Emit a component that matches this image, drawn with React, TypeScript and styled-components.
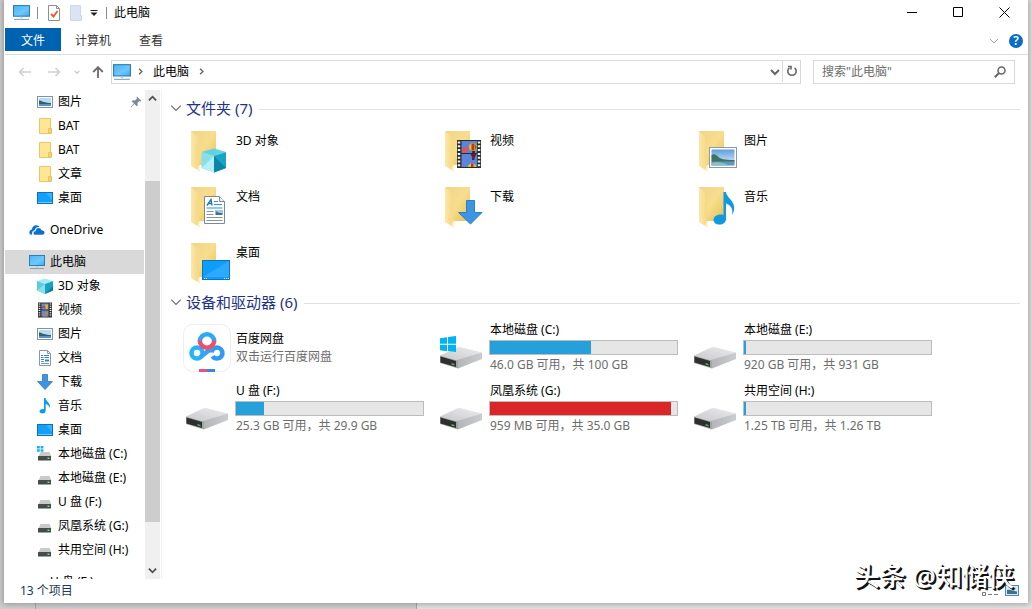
import React from "react";
import styled, { createGlobalStyle, css } from "styled-components";

const GlobalStyle = createGlobalStyle`
  * { box-sizing: border-box; }
  html, body, #root { height: 100%; margin: 0; }
  body {
    font: 12px/16px "Noto Sans", "Noto Sans CJK SC", sans-serif;
    color: #000;
    background: #e2e2e2;
    overflow: hidden;
  }
  button, input { font: inherit; color: inherit; border: 0; background: none; padding: 0; margin: 0; }
  ul { list-style: none; margin: 0; padding: 0; }
  h1, h2 { margin: 0; font-weight: normal; }
  a { color: inherit; text-decoration: none; }
  svg { display: block; flex: none; }
`;

/* ---------- window frame ---------- */

const Desktop = styled.div`
  position: relative;
  height: 100vh;
  padding: 0 4px 6px;
  background: linear-gradient(90deg, #cfcfcf 0 35px, #a9a9a9 35px 36px, #cfcfcf 36px 416px, #a9a9a9 416px 417px, #e2e2e2 417px);
`;

const Window = styled.div`
  display: flex;
  flex-direction: column;
  height: 100%;
  padding-left: 1px;
  background: #fff;
  box-shadow: 0 0 6px 1px rgba(0, 0, 0, 0.3);
`;

const TitleBar = styled.header`
  display: flex;
  align-items: center;
  height: 28px;
  padding: 0 1px 3px 8px;
`;

const Separator = styled.span<{ $gap: number }>`
  width: 1px;
  height: 12px;
  margin: 0 ${(p) => p.$gap}px;
  background: #8a8a8a;
`;

const QuickButton = styled.button<{ $width: number }>`
  display: flex;
  align-items: center;
  justify-content: center;
  width: ${(p) => p.$width}px;
  height: 20px;
`;

const WindowTitle = styled.h1`
  flex: 1;
  font-size: 12px;
`;

const WindowButton = styled.button`
  display: flex;
  align-items: center;
  justify-content: center;
  width: 46px;
  height: 24px;
`;

const Ribbon = styled.nav`
  display: flex;
  align-items: flex-start;
  height: 27px;
  padding-right: 5px;
  border-bottom: 1px solid #dadbdc;
`;

const RibbonTab = styled.button<{ $active?: boolean }>`
  height: 23px;
  padding: 2px 14px 0;
  color: #333;
  ${(p) => p.$active && css`
    padding: 2px 16px 0;
    color: #fff;
    background: #0063b1;
  `}
`;

const RibbonTools = styled.div`
  display: flex;
  align-items: center;
  gap: 10px;
  height: 26px;
  margin-left: auto;
`;

const HelpButton = styled.button`
  width: 14px;
  height: 14px;
  border-radius: 50%;
  background: #0a6cc4;
  color: #fff;
  font-size: 12px;
  font-weight: 600;
  line-height: 14px;
`;

/* ---------- address row ---------- */

const AddressRow = styled.div`
  display: flex;
  align-items: center;
  height: 35px;
  padding: 0 13px 2px 7px;
`;

const NavButton = styled.button<{ $width: number }>`
  display: flex;
  align-items: center;
  justify-content: center;
  width: ${(p) => p.$width}px;
  height: 24px;
`;

const AddressBox = styled.div`
  display: flex;
  flex: 1;
  align-items: center;
  height: 24px;
  margin-right: 12px;
  border: 1px solid #d9d9d9;
`;

const Crumb = styled.a`
  padding: 0 9px;
`;

const CrumbIcon = styled.span`
  padding: 0 6px 0 1px;
`;

const AddressEnd = styled.div`
  display: flex;
  margin-left: auto;
`;

const RefreshButton = styled(NavButton)`
  height: 22px;
  border-left: 1px solid #d9d9d9;
`;

const SearchBox = styled.label`
  display: flex;
  align-items: center;
  width: 202px;
  height: 24px;
  padding: 0 8px;
  border: 1px solid #d9d9d9;
`;

const SearchInput = styled.input`
  flex: 1;
  min-width: 0;
  outline: 0;
  &::placeholder { color: #6d6d6d; opacity: 1; }
`;

/* ---------- navigation pane ---------- */

const Body = styled.div`
  display: flex;
  flex: 1;
  min-height: 0;
`;

const NavPane = styled.nav`
  width: 140px;
  overflow: hidden;
`;

const NavGroup = styled.ul`
  & + & { margin-top: 8px; }
`;

const NavLink = styled.a<{ $root?: boolean; $selected?: boolean }>`
  display: flex;
  align-items: center;
  gap: 5px;
  height: 24px;
  margin-right: 1px;
  padding: 0 2px 0 ${(p) => (p.$root ? 24 : 32)}px;
  background: ${(p) => (p.$selected ? "#d9d9d9" : "transparent")};
  white-space: nowrap;
  > svg:last-child:not(:first-child) { margin-left: auto; }
`;

const Scrollbar = styled.div`
  display: flex;
  flex-direction: column;
  width: 15px;
  background: #f0f0f0;
`;

const ScrollButton = styled.button`
  display: flex;
  align-items: center;
  justify-content: center;
  height: 17px;
`;

const ScrollPart = styled.div<{ $share: number; $thumb?: boolean }>`
  flex: ${(p) => p.$share} 0 0;
  background: ${(p) => (p.$thumb ? "#cdcdcd" : "transparent")};
`;

/* ---------- content pane ---------- */

const Content = styled.main`
  flex: 1;
  margin-left: 1px;
  padding: 7px 8px 0 8px;
  border-left: 1px solid #f0f0f0;
  overflow: hidden;
`;

const GroupHeader = styled.h2`
  display: flex;
  align-items: center;
  height: 24px;
  margin-bottom: 2px;
  font-size: 15px;
  line-height: 22px;
  color: #1e3287;
  &::after {
    content: "";
    flex: 1;
    height: 1px;
    margin-left: 7px;
    background: #e2e2e2;
  }
`;

const GroupToggle = styled.button`
  display: flex;
  align-items: center;
  gap: 4px;
  padding-bottom: 2px;
`;

const TileGrid = styled.ul`
  display: grid;
  grid-template-columns: repeat(auto-fill, 254px);
  padding-left: 13px;
`;

const Tile = styled.li<{ $drive?: boolean }>`
  display: flex;
  align-items: center;
  gap: 4px;
  height: ${(p) => (p.$drive ? 61 : 56)}px;
`;

const TileText = styled.div<{ $top?: boolean }>`
  display: flex;
  flex-direction: column;
  gap: 2px;
  width: 189px;
  ${(p) => p.$top && css`
    align-self: flex-start;
    padding-top: 10px;
  `}
`;

const TileName = styled.span`
  padding-left: 1px;
`;

const TileDetail = styled.span`
  padding-left: 1px;
  color: #6d6d6d;
`;

const UsageBar = styled.div`
  height: 15px;
  border: 1px solid #bcbcbc;
  background: #e6e6e6;
`;

const UsageFill = styled.div<{ $full?: boolean }>`
  height: 100%;
  background: ${(p) => (p.$full ? "#da2626" : "#26a0da")};
`;

/* ---------- status bar ---------- */

const StatusBar = styled.footer`
  display: flex;
  align-items: center;
  gap: 6px;
  height: 24px;
  padding: 0 9px 0 15px;
  color: #1e395b;
`;

const StatusText = styled.span`
  flex: 1;
`;

const Watermark = styled.div`
  position: absolute;
  right: 18px;
  bottom: 16px;
  font-size: 26px;
  line-height: 34px;
  font-weight: 500;
  color: #fff;
  text-shadow: 1px 1px 0 #111, 2px 2px 0 #111;
  pointer-events: none;
`;

/* ---------- small icons ---------- */

type IconProps = { size?: number };

const Chevron = ({ dir, color = "#666", size = 9, weight = 2 }: { dir: "up" | "down" | "right"; color?: string; size?: number; weight?: number }) => {
  const d = { up: "M1 7L5 3L9 7", down: "M1 3L5 7L9 3", right: "M3 1L7 5L3 9" }[dir];
  return (
    <svg width={size} height={size} viewBox="0 0 10 10" fill="none" stroke={color} strokeWidth={weight}>
      <path d={d} />
    </svg>
  );
};

const PcIcon = ({ size = 16 }: IconProps) => (
  <svg width={size} height={size} viewBox="0 0 16 16">
    <defs>
      <linearGradient id="pc" x1="0" y1="0" x2="1" y2="1">
        <stop offset="0" stopColor="#4db5f5" />
        <stop offset="0.6" stopColor="#6cc8ff" />
        <stop offset="1" stopColor="#3ea6ee" />
      </linearGradient>
    </defs>
    <rect x="0.5" y="1.5" width="15" height="10" fill="url(#pc)" stroke="#2d7fae" />
    <path d="M7 12h2v1.4h-2z" fill="#b9ccd8" />
    <path d="M1 14.5h14" stroke="#7fa3bb" />
  </svg>
);

const SmallFolder = () => (
  <svg width="16" height="16" viewBox="0 0 16 16">
    <path d="M2.5 0.5h11v10h1v5h-12z" fill="#ffe594" stroke="#e9c766" />
    <path d="M11.5 15v-4.500h2.500v4.500z" fill="#fbd972" stroke="#e2bd55" strokeWidth="0.8" />
  </svg>
);

const SmallPicture = () => (
  <svg width="16" height="16" viewBox="0 0 16 16">
    <rect x="0.5" y="2.500" width="15" height="11" fill="#fff" stroke="#7f93a3" />
    <rect x="2" y="4" width="12" height="8" fill="#b4dcf5" />
    <path d="M2 6.500c2-.5 3 1 5 1.500s4 1 7 1v1.500H2z" fill="#375f69" />
    <path d="M2 10h12v2H2z" fill="#5a92c4" />
  </svg>
);

const SmallDesktop = () => (
  <svg width="16" height="16" viewBox="0 0 16 16">
    <rect x="0.5" y="2.500" width="15" height="11" fill="#12a0fb" stroke="#0c72bd" />
    <path d="M9 3h6v7z" fill="#38b1ff" />
    <path d="M1.500 12.500h13" stroke="#d5efff" strokeDasharray="1 1" />
  </svg>
);

const OneDriveIcon = () => (
  <svg width="16" height="16" viewBox="0 0 16 16">
    <path d="M0.300 10.600c0-2 1.300-3 2.600-3.200C3 5 5 3.200 7.200 3.200c1.600 0 2.700.7 3.400 1.900-2.400-.3-4.300 1-4.900 3.100C3.700 8.500 2.700 10 3.200 12.600 1.400 12.800.3 12 .3 10.600z" fill="#0f6fd0" />
    <path d="M4.200 11.200c0-1.400 1-2.300 2.300-2.400.2-2 1.500-3.100 3.100-3.100 1.500 0 2.500.9 3 2.200 1.800 0 3.200 1.100 3.200 2.700 0 1.500-1 2.500-2.500 2.500H6.500c-1.400 0-2.300-.7-2.300-1.900z" fill="#0f6fd0" stroke="#fff" strokeWidth="0.700" />
  </svg>
);

const SmallCube = () => (
  <svg width="16" height="16" viewBox="0 0 16 16">
    <path d="M0 3l8-2.500L16 3l-8 3z" fill="#a6ebf2" />
    <path d="M0 3l8 3v10l-8-3.500z" fill="#58cbdc" />
    <path d="M16 3L8 6v10l8-3.500z" fill="#18a3c4" />
    <path d="M0 12.500l8-6.500v10z" fill="#8ae0ea" />
    <path d="M8 16l8-3.500V8z" fill="#0d7f9f" />
  </svg>
);

const SmallVideo = () => (
  <svg width="16" height="16" viewBox="0 0 16 16">
    <rect x="1" y="0.500" width="14" height="15" fill="#333" />
    <rect x="4.500" y="1.500" width="7" height="6" fill="#6887d8" />
    <rect x="4.500" y="8.500" width="7" height="6" fill="#6887d8" />
    <path d="M8 2.500h3v4l-2 1z" fill="#d9b82b" />
    <path d="M5 4h3v2H5z" fill="#c14848" />
    <path d="M8 10h3v2H8zM6 13h4v1.500H6z" fill="#c98a26" />
    <path d="M2.500 1.500v13M13.500 1.500v13" stroke="#fff" strokeWidth="1.500" strokeDasharray="1 1.200" />
  </svg>
);

const SmallDoc = () => (
  <svg width="16" height="16" viewBox="0 0 16 16">
    <path d="M2.500 0.500h8l3 3v12h-11z" fill="#fff" stroke="#8b979f" />
    <path d="M10.500 0.500v3h3" fill="none" stroke="#8b979f" />
    <path d="M4 5.500h2M7 5.500h5M4 7.500h2.500M7.500 7.500h4.500M4 9.500h3" stroke="#1d8cc8" strokeWidth="1.200" />
    <path d="M8 9.500h4v2h-4z" fill="#3a83a8" />
    <path d="M4 11.500h3M4 13.500h8" stroke="#5f9dbd" />
  </svg>
);

const SmallDownload = () => (
  <svg width="16" height="16" viewBox="0 0 16 16">
    <path d="M5.500 0.500h5v7h5L8 15.500.5 7.500h5z" fill="#3e93df" stroke="#3079bd" strokeWidth="0.800" />
  </svg>
);

const SmallMusic = () => (
  <svg width="16" height="16" viewBox="0 0 16 16">
    <path d="M7 0h1.600c0 3.500 5.400 4.500 4.400 10.500-.5-2.500-2.500-4-4.300-4.500v6.500c0 2-1.500 3-3.200 3S2.500 14.600 2.500 13.300c0-1.600 2-2.800 4.500-2.300z" fill="#109be6" />
  </svg>
);

const SmallDrive = ({ system }: { system?: boolean }) => (
  <svg width="16" height="16" viewBox="0 0 16 16">
    <path d="M3.500 6h9l2 4.500h-13z" fill="#c9c9c9" />
    <rect x="1" y="10" width="13" height="4.500" fill="#474b4a" />
    <rect x="10.500" y="11.500" width="2" height="1.500" fill="#5be27e" />
    {system && <path d="M0 0h2.800v2.500H0zM3.600 0h2.800v2.500H3.600zM0 3.300h2.800v2.500H0zM3.600 3.300h2.800v2.500H3.600z" fill="#17b0f0" />}
  </svg>
);

const PinIcon = () => (
  <svg width="12" height="12" viewBox="0 0 12 12">
    <path d="M7 0.500L11.500 5l-1.300.5L9.500 5 7.500 7l.3 2.300-1 1L4.500 8 1 11.500l-.5-.5L4 7.500 1.700 5.200l1-1L5 4.500l2-2-.5-.7z" fill="#808a94" />
  </svg>
);

/* ---------- large icons ---------- */

const Large = ({ children }: { children: React.ReactNode }) => (
  <svg width="48" height="48" viewBox="0 0 48 48">{children}</svg>
);

const FolderBase = () => (
  <>
    <defs>
      <linearGradient id="back" x1="0" y1="0" x2="1" y2="1">
        <stop offset="0" stopColor="#f0d58c" />
        <stop offset="0.500" stopColor="#f8dd8d" />
        <stop offset="1" stopColor="#e5c04f" />
      </linearGradient>
      <linearGradient id="flap" x1="0" y1="0" x2="1" y2="0">
        <stop offset="0" stopColor="#fbe7a6" />
        <stop offset="1" stopColor="#f6d67e" />
      </linearGradient>
    </defs>
    <path d="M8 4h25v34H15z" fill="url(#back)" />
    <path d="M8 4l8 7.500V38l1 2v4.500L8 39z" fill="url(#flap)" />
    <path d="M15.500 38.500l1.500 1.500v4.500l-2.500-1.500z" fill="#fff3cf" />
  </>
);

const FolderCube = () => (
  <Large>
    <FolderBase />
    <path d="M18.500 25L31 21.500 43 25l-12 4z" fill="#5fd3e3" />
    <path d="M18.500 25L31 29v16.500L18.500 41z" fill="#86dfeb" />
    <path d="M18.500 41L31 29v16.500z" fill="#b4f0f5" />
    <path d="M43 25l-12 4v16.500L43 41z" fill="#17a5c5" />
    <path d="M31 29l12 12-12 4.500z" fill="#0c86a6" />
  </Large>
);

const FolderVideo = () => (
  <Large>
    <FolderBase />
    <rect x="20" y="13" width="24" height="28" fill="#2b2b2b" />
    <rect x="24.500" y="14" width="15.500" height="12" fill="#5b84dd" />
    <rect x="24.500" y="27" width="15.500" height="13" fill="#5b84dd" />
    <ellipse cx="36" cy="20" rx="4" ry="4" fill="#e3bf22" />
    <path d="M34.500 16.500h3v7h-3z" fill="#c53131" />
    <path d="M38 17v6l2-3z" fill="#3b8a38" />
    <path d="M25 22l4-3 3 4-3 3h-4z" fill="#d05a68" />
    <path d="M35 24h3v2h-3zM33.500 27h6l-2 4h-2zM35 31h2.500v2H35z" fill="#5a2330" />
    <path d="M31 40c0-5 8-5 8 0z" fill="#e3bf22" />
    <path d="M34 36.500h2.500V40H34z" fill="#c53131" />
    <path d="M22 14.500v26M42 14.500v26" stroke="#f4f4f4" strokeWidth="2.500" strokeDasharray="2 1.800" />
  </Large>
);

const FolderPicture = () => (
  <Large>
    <FolderBase />
    <defs>
      <linearGradient id="sky" x1="0" y1="0" x2="0" y2="1">
        <stop offset="0" stopColor="#5f9ddf" />
        <stop offset="1" stopColor="#e4f2fb" />
      </linearGradient>
    </defs>
    <rect x="18.500" y="20.500" width="27" height="20" fill="#fff" stroke="#8c9aa5" />
    <rect x="20.500" y="22.500" width="23" height="16" fill="url(#sky)" />
    <path d="M20.500 28c3-2 5 0 7 2s5 3 16 3v2h-23z" fill="#3e7361" />
    <path d="M20.500 34.500h23v4h-23z" fill="#5d97bf" />
    <path d="M20.500 36c6-2 12 0 18 2.500h-18z" fill="#8cc0c4" />
  </Large>
);

const FolderDoc = () => (
  <Large>
    <FolderBase />
    <path d="M21.500 13.500h15l5 5v22h-20z" fill="#fff" stroke="#7d8a94" />
    <path d="M36.500 13.500v5h5" fill="#eef2f5" stroke="#7d8a94" />
    <path d="M24 22.500l4-6 1 6M25.500 20.500h3" fill="none" stroke="#2276bb" strokeWidth="1.400" />
    <path d="M31 18.500h4M31 21.500h8M23.500 25h16" stroke="#2d93d1" strokeWidth="1.200" />
    <path d="M23.500 28.500h7M23.500 31.500h7M23.500 34.500h16M23.500 37.500h16" stroke="#8494a0" />
    <rect x="32.500" y="27" width="7" height="5" fill="#436f90" />
    <path d="M32.500 28l4 2 3 0v-3h-7z" fill="#9ccbec" />
  </Large>
);

const FolderDownload = () => (
  <Large>
    <FolderBase />
    <path d="M29.500 17.500h8v12h7.500L33.500 41 21.500 29.500h8z" fill="#3c95e3" stroke="#2f7fc7" />
  </Large>
);

const FolderMusic = () => (
  <Large>
    <FolderBase />
    <path d="M32.500 9h2.500c.5 6 9.500 9 8 17.500-.3 2.500-1 4-2 5.500 1.500-6-1.500-10-6-11.500V36c0 3.500-3 5.500-6.500 5.500-3.500 0-6-1.800-6-4.500 0-4 5-6.500 10-5z" fill="#0f99e0" />
  </Large>
);

const FolderDesktop = () => (
  <Large>
    <FolderBase />
    <rect x="19.500" y="21.500" width="27" height="19" fill="#0f9dfa" stroke="#0b73c0" />
    <path d="M20 38L46 22v16z" fill="#2caaff" />
    <path d="M21 39.500h4M41 39.500h5" stroke="#d9f0ff" strokeDasharray="1 1" />
  </Large>
);

const DriveIcon = ({ system }: { system?: boolean }) => (
  <Large>
    <defs>
      <linearGradient id="lid" x1="0" y1="1" x2="1" y2="0">
        <stop offset="0" stopColor="#c8c8ca" />
        <stop offset="1" stopColor="#ececee" />
      </linearGradient>
      <linearGradient id="side" x1="0" y1="0" x2="1" y2="0">
        <stop offset="0" stopColor="#b4b5b7" />
        <stop offset="1" stopColor="#cbccd0" />
      </linearGradient>
    </defs>
    <path d="M3 31.500l17-8q2-.8 4-.3L45 28.500 21 36.500z" fill="url(#lid)" />
    <path d="M20 36L45 28.500v6.500L21 44.500z" fill="url(#side)" />
    <path d="M3 31.500l18 5v8L3 39z" fill="#a3a4a6" />
    <path d="M3.500 32.500l15.500 4.500v6L3.500 38.500z" fill="#2d302f" />
    <path d="M14.500 39l3 1v1.500l-3-1z" fill="#5fae6b" />
    {system && <path d="M3 14.200l7-1v6.600H3zM11 13l8-1v7.800h-8zM3 20.800h7v6.400l-7-1zM11 20.800h8V28l-8-1z" fill="#00b3f2" />}
  </Large>
);

const NetdiskIcon = () => (
  <Large>
    <rect x="0.500" y="0.500" width="47" height="47" rx="9" fill="#fff" stroke="#eeeeee" />
    <g fill="none" strokeWidth="4.500">
      <circle cx="14" cy="29" r="5.500" stroke="#25b4f8" />
      <path d="M29.500 32.300A5.500 5.500 0 1 0 28.500 28.500" stroke="#2f9bf6" />
      <path d="M17.500 33L29.500 23.500" stroke="#35a2f6" />
      <path d="M16.800 17.500a7.200 7.200 0 0 1 14.400 0" stroke="#2aa9f7" />
      <path d="M16.800 16.500a7.200 7.200 0 0 0 14.400 0" stroke="#ef4f6c" />
    </g>
    <path d="M16 45h8v3h-8z" fill="#ef4f7a" />
    <path d="M24 45h8v3h-8z" fill="#3a86e6" />
  </Large>
);

/* ---------- data ---------- */

type NavEntry = { label: string; icon: React.ReactNode; root?: boolean; selected?: boolean; pinned?: boolean };

const navGroups: NavEntry[][] = [
  [
    { label: "图片", icon: <SmallPicture />, pinned: true },
    { label: "BAT", icon: <SmallFolder /> },
    { label: "BAT", icon: <SmallFolder /> },
    { label: "文章", icon: <SmallFolder /> },
    { label: "桌面", icon: <SmallDesktop /> },
  ],
  [{ label: "OneDrive", icon: <OneDriveIcon />, root: true }],
  [
    { label: "此电脑", icon: <PcIcon />, root: true, selected: true },
    { label: "3D 对象", icon: <SmallCube /> },
    { label: "视频", icon: <SmallVideo /> },
    { label: "图片", icon: <SmallPicture /> },
    { label: "文档", icon: <SmallDoc /> },
    { label: "下载", icon: <SmallDownload /> },
    { label: "音乐", icon: <SmallMusic /> },
    { label: "桌面", icon: <SmallDesktop /> },
    { label: "本地磁盘 (C:)", icon: <SmallDrive system /> },
    { label: "本地磁盘 (E:)", icon: <SmallDrive /> },
    { label: "U 盘 (F:)", icon: <SmallDrive /> },
    { label: "凤凰系统 (G:)", icon: <SmallDrive /> },
    { label: "共用空间 (H:)", icon: <SmallDrive /> },
  ],
  [{ label: "U 盘 (F:)", icon: <SmallDrive />, root: true }],
];

const folders = [
  { label: "3D 对象", icon: <FolderCube /> },
  { label: "视频", icon: <FolderVideo /> },
  { label: "图片", icon: <FolderPicture /> },
  { label: "文档", icon: <FolderDoc /> },
  { label: "下载", icon: <FolderDownload /> },
  { label: "音乐", icon: <FolderMusic /> },
  { label: "桌面", icon: <FolderDesktop /> },
];

type Device = { label: string; detail: string; icon: React.ReactNode; used?: number };

const devices: Device[] = [
  { label: "百度网盘", detail: "双击运行百度网盘", icon: <NetdiskIcon /> },
  { label: "本地磁盘 (C:)", detail: "46.0 GB 可用，共 100 GB", icon: <DriveIcon system />, used: 54 },
  { label: "本地磁盘 (E:)", detail: "920 GB 可用，共 931 GB", icon: <DriveIcon />, used: 1 },
  { label: "U 盘 (F:)", detail: "25.3 GB 可用，共 29.9 GB", icon: <DriveIcon />, used: 15 },
  { label: "凤凰系统 (G:)", detail: "959 MB 可用，共 35.0 GB", icon: <DriveIcon />, used: 97 },
  { label: "共用空间 (H:)", detail: "1.25 TB 可用，共 1.26 TB", icon: <DriveIcon />, used: 1 },
];

/* ---------- page ---------- */

export default function App() {
  return (
    <>
      <GlobalStyle />
      <Desktop>
        <Window>
          <TitleBar>
            <PcIcon size={17} />
            <Separator $gap={7} />
            <QuickButton $width={18} aria-label="属性">
              <svg width="14" height="16" viewBox="0 0 14 16" fill="none">
                <path d="M1.500 0.500h8l3 3v12h-11z" fill="#fff" stroke="#8f8f8f" />
                <path d="M9.500 0.500v3h3" stroke="#8f8f8f" />
                <path d="M4 9l2.500 2.500L10.500 6" stroke="#d8612c" strokeWidth="1.800" />
              </svg>
            </QuickButton>
            <QuickButton $width={26} aria-label="新建文件夹">
              <svg width="14" height="16" viewBox="0 0 14 16">
                <path d="M1.500 0.500h10v10h1v5h-11z" fill="#dbe4f3" stroke="#ccd7ea" />
              </svg>
            </QuickButton>
            <QuickButton $width={10} aria-label="自定义快速访问工具栏">
              <svg width="8" height="6" viewBox="0 0 8 6">
                <path d="M0.500 0.500h7" stroke="#222" />
                <path d="M0.500 2.500h7L4 6z" fill="#222" />
              </svg>
            </QuickButton>
            <Separator $gap={7} />
            <WindowTitle>此电脑</WindowTitle>
            <WindowButton aria-label="最小化">
              <svg width="11" height="11" viewBox="0 0 11 11"><path d="M0 5.500h10" stroke="#000" /></svg>
            </WindowButton>
            <WindowButton aria-label="最大化">
              <svg width="11" height="11" viewBox="0 0 11 11"><path d="M0.500 0.500h9v9h-9z" fill="none" stroke="#000" /></svg>
            </WindowButton>
            <WindowButton aria-label="关闭">
              <svg width="11" height="11" viewBox="0 0 11 11"><path d="M0.500 0.500l10 10M10.500 0.500l-10 10" stroke="#000" /></svg>
            </WindowButton>
          </TitleBar>

          <Ribbon aria-label="功能区">
            <RibbonTab $active>文件</RibbonTab>
            <RibbonTab>计算机</RibbonTab>
            <RibbonTab>查看</RibbonTab>
            <RibbonTools>
              <Chevron dir="down" color="#a0a0a0" size={10} weight={1} />
              <HelpButton aria-label="帮助">?</HelpButton>
            </RibbonTools>
          </Ribbon>

          <AddressRow>
            <NavButton $width={26} aria-label="后退">
              <svg width="14" height="10" viewBox="0 0 14 10" fill="none" stroke="#cfcfcf" strokeWidth="1.500"><path d="M13 5H1.500M5.500 1l-4 4 4 4" /></svg>
            </NavButton>
            <NavButton $width={32} aria-label="前进">
              <svg width="14" height="10" viewBox="0 0 14 10" fill="none" stroke="#cfcfcf" strokeWidth="1.500"><path d="M1 5h11.500M8.500 1l4 4-4 4" /></svg>
            </NavButton>
            <NavButton $width={14} aria-label="最近浏览的位置">
              <Chevron dir="down" color="#c4c4c4" size={6} weight={2} />
            </NavButton>
            <NavButton $width={27} aria-label="上移">
              <svg width="12" height="12" viewBox="0 0 12 12" fill="none" stroke="#6b6b6b" strokeWidth="1.800"><path d="M6 12V1.500M1.200 6L6 1.200 10.800 6" /></svg>
            </NavButton>
            <AddressBox>
              <CrumbIcon><PcIcon size={18} /></CrumbIcon>
              <Chevron dir="right" size={7} />
              <Crumb href="#">此电脑</Crumb>
              <Chevron dir="right" size={7} />
              <AddressEnd>
                <NavButton $width={14} aria-label="历史记录"><Chevron dir="down" size={10} /></NavButton>
                <RefreshButton $width={18} aria-label="刷新">
                  <svg width="12" height="12" viewBox="0 0 12 12" fill="none" stroke="#666" strokeWidth="1.600">
                    <path d="M8.600 2.800A4.200 4.200 0 1 1 3.400 2.800" />
                    <path d="M2 1.500h3v3" />
                  </svg>
                </RefreshButton>
              </AddressEnd>
            </AddressBox>
            <SearchBox>
              <SearchInput type="text" placeholder={'搜索"此电脑"'} aria-label="搜索" />
              <svg width="12" height="12" viewBox="0 0 12 12" fill="none" stroke="#666">
                <circle cx="7.500" cy="4.500" r="3.500" strokeWidth="1.500" />
                <path d="M5 7L0.800 11.200" strokeWidth="2" />
              </svg>
            </SearchBox>
          </AddressRow>

          <Body>
            <NavPane aria-label="导航窗格">
              {navGroups.map((group, g) => (
                <NavGroup key={g}>
                  {group.map((entry, i) => (
                    <li key={i}>
                      <NavLink href="#" $root={entry.root} $selected={entry.selected}>
                        {entry.icon}
                        <span>{entry.label}</span>
                        {entry.pinned && <PinIcon />}
                      </NavLink>
                    </li>
                  ))}
                </NavGroup>
              ))}
            </NavPane>
            <Scrollbar>
              <ScrollButton aria-label="向上滚动"><Chevron dir="up" color="#505050" /></ScrollButton>
              <ScrollPart $share={74} />
              <ScrollPart $share={341} $thumb />
              <ScrollPart $share={40} />
              <ScrollButton aria-label="向下滚动"><Chevron dir="down" color="#505050" /></ScrollButton>
            </Scrollbar>

            <Content>
              <section>
                <GroupHeader>
                  <GroupToggle>
                    <Chevron dir="down" color="#6d6d6d" size={12} weight={1} />
                    文件夹 (7)
                  </GroupToggle>
                </GroupHeader>
                <TileGrid>
                  {folders.map((f) => (
                    <Tile key={f.label}>
                      {f.icon}
                      <TileText $top><TileName>{f.label}</TileName></TileText>
                    </Tile>
                  ))}
                </TileGrid>
              </section>
              <section>
                <GroupHeader>
                  <GroupToggle>
                    <Chevron dir="down" color="#6d6d6d" size={12} weight={1} />
                    设备和驱动器 (6)
                  </GroupToggle>
                </GroupHeader>
                <TileGrid>
                  {devices.map((d) => (
                    <Tile key={d.label} $drive>
                      {d.icon}
                      <TileText>
                        <TileName>{d.label}</TileName>
                        {d.used !== undefined && (
                          <UsageBar role="meter" aria-label={d.label} aria-valuemin={0} aria-valuemax={100} aria-valuenow={d.used}>
                            <UsageFill $full={d.used > 90} style={{ width: `${d.used}%` }} />
                          </UsageBar>
                        )}
                        <TileDetail>{d.detail}</TileDetail>
                      </TileText>
                    </Tile>
                  ))}
                </TileGrid>
              </section>
            </Content>
          </Body>

          <StatusBar>
            <StatusText>13 个项目</StatusText>
            <svg width="17" height="14" viewBox="0 0 17 14" fill="none" stroke="#777">
              <path d="M0.500 1.500h3v3h-3zM0.500 8.500h3v3h-3z" />
              <path d="M6 3.500h4M12 3.500h4M6 10.500h4M12 10.500h4" />
            </svg>
            <svg width="14" height="12" viewBox="0 0 14 12">
              <rect x="0.500" y="0.500" width="13" height="10" fill="#d5ecfa" stroke="#5c87a8" />
              <path d="M2 5c3-1 5 1 10 1.500V9H2z" fill="#3d6f8f" />
            </svg>
          </StatusBar>
        </Window>
        <Watermark>头条 @知储侠</Watermark>
      </Desktop>
    </>
  );
}
